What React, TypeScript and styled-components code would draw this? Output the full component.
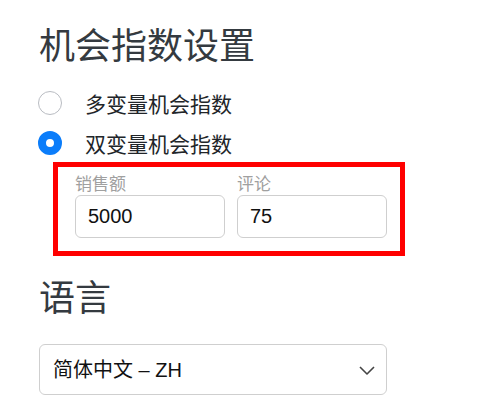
import React, { useState } from "react";
import styled, { createGlobalStyle } from "styled-components";

const GlobalStyle = createGlobalStyle`
  body {
    margin: 0;
    background: #ffffff;
    font-family: "Liberation Sans", "Noto Sans CJK SC", sans-serif;
    color: #212529;
  }
`;

const Page = styled.div`
  width: 349px;
  padding: 25px 0 0 38px;
`;

const Heading = styled.h2<{ $gap?: number }>`
  margin: ${(p) => p.$gap ?? 0}px 0 0 1px;
  font-size: 36px;
  font-weight: 400;
  line-height: 43px;
  color: #343a40;
`;

const RadioList = styled.div`
  display: flex;
  flex-direction: column;
  gap: 2px;
  margin-top: 16px;
`;

const RadioRow = styled.label`
  display: flex;
  align-items: center;
  gap: 23px;
  height: 38px;
  font-size: 21px;
  color: #212529;
  cursor: pointer;
`;

const RadioDot = styled.input`
  appearance: none;
  margin: 0;
  width: 24px;
  height: 24px;
  border-radius: 50%;
  border: 1px solid #b9bcc2;
  background: #fff;
  flex-shrink: 0;

  &:checked {
    border: 8px solid #0b7dfa;
  }
`;

const Highlight = styled.div`
  margin: 0 0 0 15px;
  width: 352px;
  box-sizing: border-box;
  border: 5px solid #ff0000;
  padding: 7px 13px 13px 17px;
  display: grid;
  grid-template-columns: 1fr 1fr;
  column-gap: 12px;
`;

const Field = styled.div`
  display: flex;
  flex-direction: column;
`;

const FieldLabel = styled.label`
  font-size: 17px;
  line-height: 21px;
  color: #a0a0a0;
`;

const NumberInput = styled.input`
  box-sizing: border-box;
  width: 100%;
  height: 43px;
  margin: 0;
  padding: 0 12px;
  border: 1px solid #cfcfcf;
  border-radius: 6px;
  font-family: "Liberation Sans", sans-serif;
  font-size: 20px;
  color: #111;
  outline: none;
`;

const SelectWrap = styled.div`
  position: relative;
  margin-top: 24px;
  width: 348px;
  margin-left: 1px;
`;

const Select = styled.select`
  appearance: none;
  box-sizing: border-box;
  width: 100%;
  height: 51px;
  padding: 0 40px 0 13px;
  border: 1px solid #cfcfcf;
  border-radius: 6px;
  background: #fff;
  font-family: "Liberation Sans", "Noto Sans CJK SC", sans-serif;
  font-size: 20px;
  color: #111;
  outline: none;
`;

const Chevron = styled.svg`
  position: absolute;
  right: 12px;
  top: 22px;
  pointer-events: none;
`;

export default function App() {
  const [mode, setMode] = useState("dual");
  const [sales, setSales] = useState("5000");
  const [reviews, setReviews] = useState("75");

  return (
    <Page>
      <GlobalStyle />
      <Heading>机会指数设置</Heading>
      <RadioList>
        <RadioRow>
          <RadioDot type="radio" name="mode" checked={mode === "multi"} onChange={() => setMode("multi")} />
          多变量机会指数
        </RadioRow>
        <RadioRow>
          <RadioDot type="radio" name="mode" checked={mode === "dual"} onChange={() => setMode("dual")} />
          双变量机会指数
        </RadioRow>
      </RadioList>

      <Highlight>
        <Field>
          <FieldLabel>销售额</FieldLabel>
          <NumberInput value={sales} onChange={(e) => setSales(e.target.value)} />
        </Field>
        <Field>
          <FieldLabel>评论</FieldLabel>
          <NumberInput value={reviews} onChange={(e) => setReviews(e.target.value)} />
        </Field>
      </Highlight>

      <Heading $gap={21}>语言</Heading>
      <SelectWrap>
        <Select defaultValue="zh">
          <option value="zh">简体中文 – ZH</option>
          <option value="en">English – EN</option>
        </Select>
        <Chevron width="16" height="9" viewBox="0 0 16 9" fill="none">
          <polyline points="1,1 8,8 15,1" stroke="#444" strokeWidth="1.6" strokeLinejoin="round" />
        </Chevron>
      </SelectWrap>
    </Page>
  );
}
